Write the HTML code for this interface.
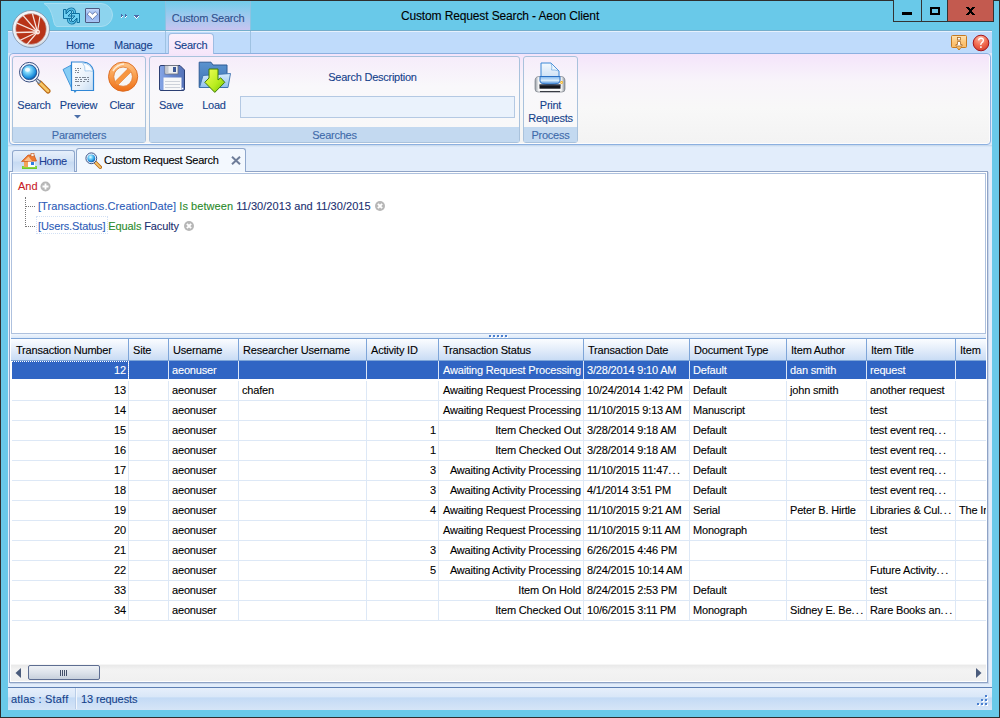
<!DOCTYPE html>
<html><head><meta charset="utf-8">
<style>
*{margin:0;padding:0;box-sizing:border-box}
html,body{width:1000px;height:718px;overflow:hidden;background:#2e2e2e}
body{font-family:"Liberation Sans",sans-serif;font-size:11px;letter-spacing:-0.25px;position:relative;-webkit-text-stroke:0.1px currentColor}
.a{position:absolute}
#frame{left:1px;top:1px;width:998px;height:716px;background:#69c9e9}
#title{left:0;top:9px;width:1000px;text-align:center;font-size:12px;letter-spacing:-0.13px;color:#000}
.wb{top:0;height:22px;border:1px solid #333;border-top:none;background:#69c9e9}
#ribtabs{left:8px;top:31px;width:984px;height:22px;background:#bfdbfb;border-top:1px solid #e6f1fd}
.rtab{top:39px;color:#15428b;font-size:11px}
#ribbg{left:8px;top:53px;width:984px;height:92px;background:#dde9fa}
#ribpanel{left:9px;top:53px;width:982px;height:92px;border:1px solid #8cb0e0;border-radius:4px;box-shadow:inset 1px 0 0 #fcfcfd,inset -1px 0 0 #fcfcfd,inset 0 -1px 0 #fcfcfd;background:linear-gradient(#f4e4fa,#f8f4fa 30%,#f8f8f8 60%,#f3f3f3)}
.grp{top:56px;height:87px;border:1px solid #a9c2dc;border-radius:3px;background:linear-gradient(#f6ecfa,#f9f8fb 35%,#f8f8f8)}
.cap{left:0;right:0;bottom:0;height:15px;background:#c3d9f0;color:#3e6aaa;text-align:center;line-height:16px}
.lbl{color:#15428b;text-align:center}
#content{left:8px;top:145px;width:984px;height:542px;background:#e2edfb}
#outer{left:9px;top:171px;width:979px;height:512px;background:#fff;border:1px solid #8fa3c6;box-shadow:1px 1px 0 #c8d6ea}
#filter{left:11px;top:173px;width:975px;height:161px;background:#fff;border:1px solid #aec1de}
#split{left:11px;top:334px;width:975px;height:4px;background:linear-gradient(#f0f6fd,#dce9f9)}
#grid{left:11px;top:338px;width:975px;height:343px;background:#fff}
#status{left:8px;top:687px;width:984px;height:23px;background:linear-gradient(#e6effb,#d9e7f8 40%,#c3daf5 45%,#d6e5f7);border-top:1px solid #5d7fb3}
.hdr{height:23px;background:linear-gradient(#fbfdff,#e8f0fb 40%,#c9dcf5);border-top:1px solid #7ea5d8;border-bottom:1px solid #7ea5d8}
.hc{position:absolute;letter-spacing:-0.2px;height:21px;line-height:23px;padding-left:4px;border-right:1px solid #7ea5d8;white-space:nowrap;overflow:hidden;color:#000}
.row{left:11px;width:975px;height:20px}
.c{position:absolute;height:20px;line-height:19px;letter-spacing:-0.18px;padding:0 2px 0 3px;border-right:1px solid #dde8f6;border-bottom:1px solid #dde8f6;white-space:nowrap;overflow:hidden;color:#000}
.r{text-align:right}
.el{letter-spacing:1.35px}
.c.s{background:#3065c4;color:#fff;border-right-color:#dbe6f7;border-bottom-color:#fff;height:19px;line-height:19px}
</style></head><body>
<div class="a" id="frame"></div>

<!-- QAT pill -->
<svg class="a" style="left:30px;top:2px" width="84" height="26" viewBox="0 0 84 26"><path d="M14 1.5 H71 A11.5 11.5 0 0 1 71 24.5 H27 C22 24.5 25 8 14 1.5 Z" fill="#8dd4ee" stroke="#a6def2" stroke-width="1"/></svg>
<!-- orb -->
<svg class="a" style="left:11px;top:9px;z-index:5" width="40" height="40" viewBox="0 0 40 40">
<defs><radialGradient id="og" cx="0.45" cy="0.35" r="0.7"><stop offset="0" stop-color="#ffffff"/><stop offset="0.82" stop-color="#e8edf2"/><stop offset="1" stop-color="#b4c0cc"/></radialGradient>
<radialGradient id="fc" cx="0.5" cy="0.5" r="0.5"><stop offset="0" stop-color="#ffffff"/><stop offset="0.6" stop-color="#fbe9e4"/><stop offset="1" stop-color="#fbe9e4" stop-opacity="0"/></radialGradient></defs>
<circle cx="20" cy="20" r="18.5" fill="url(#og)" stroke="#7d8fa6" stroke-width="0.8"/>
<circle cx="20" cy="20" r="15.4" fill="#b83418" stroke="#c9d2dc" stroke-width="0.5"/>
<g stroke="#f7e4de" stroke-linecap="round">
<path d="M26.5 23 L6 14.2" stroke-width="1.3"/><path d="M26.5 23 L12 6.4" stroke-width="1.3"/><path d="M26.5 23 L21.5 5" stroke-width="1.2"/><path d="M26.5 23 L28.8 8" stroke-width="1.2"/><path d="M26.5 23 L5 23.5" stroke-width="1.3"/><path d="M26.5 23 L9.7 31" stroke-width="1.3"/><path d="M26.5 23 L16.6 34.6" stroke-width="1.3"/>
</g>
<circle cx="26.6" cy="23" r="3" fill="url(#fc)"/>
<circle cx="27" cy="22.8" r="0.9" fill="#d47a66"/>
</svg>
<!-- QAT icons -->
<svg class="a" style="left:62px;top:7px" width="19" height="18" viewBox="0 0 19 18">
<g fill="none" stroke-linecap="butt">
<path d="M4.5 8 C5 3.5 7.5 2 9.5 2 C12 2 13 4.5 12.5 7.5" stroke="#0f6f9e" stroke-width="3"/>
<path d="M4.5 8 C5 3.5 7.5 2 9.5 2 C12 2 13 4.5 12.5 7.5" stroke="#59c2ea" stroke-width="1.3"/>
<path d="M14 10 C13.5 14.5 11.5 16 9.5 16 C7 16 6 13.5 6.5 10.5" stroke="#0f6f9e" stroke-width="3"/>
<path d="M14 10 C13.5 14.5 11.5 16 9.5 16 C7 16 6 13.5 6.5 10.5" stroke="#59c2ea" stroke-width="1.3"/>
</g>
<path d="M1.5 2.5 H4 V7 L8 3 L10 5 L6 9 H9.5 V11.5 H1.5 Z" fill="#6fd0f2" stroke="#0f6f9e" stroke-width="1"/>
<path d="M17.5 15.5 H15 V11 L11 15 L9 13 L13 9 H9.5 V6.5 H17.5 Z" fill="#6fd0f2" stroke="#0f6f9e" stroke-width="1"/>
</svg>
<div class="a" style="left:85px;top:8px;width:15px;height:15px;border:1px solid #4d5a80;border-radius:1px;background:linear-gradient(#c4d8fa,#90b0ee 50%,#a9c5f5)"></div>
<svg class="a" style="left:86px;top:10px" width="13" height="10" viewBox="0 0 13 10"><path d="M1.3 4.2 L3.8 1.8 L6.5 4.2 L9.2 1.8 L11.7 4.2 L6.5 9.3 Z" fill="#fff" stroke="#2c3f78" stroke-width="0.9" stroke-dasharray="1 0.6"/></svg>
<svg class="a" style="left:120px;top:13px" width="21" height="7" viewBox="0 0 21 7" shape-rendering="crispEdges"><rect x="1" y="1" width="1" height="1" fill="#4a6aa8"/><rect x="1" y="2" width="1" height="1" fill="#4a6aa8"/><rect x="2" y="2" width="1" height="1" fill="#4a6aa8"/><rect x="1" y="3" width="1" height="1" fill="#4a6aa8"/><rect x="2" y="3" width="1" height="1" fill="#ffffff"/><rect x="1" y="4" width="1" height="1" fill="#ffffff"/><rect x="5" y="1" width="1" height="1" fill="#4a6aa8"/><rect x="5" y="2" width="1" height="1" fill="#4a6aa8"/><rect x="6" y="2" width="1" height="1" fill="#4a6aa8"/><rect x="5" y="3" width="1" height="1" fill="#4a6aa8"/><rect x="6" y="3" width="1" height="1" fill="#ffffff"/><rect x="5" y="4" width="1" height="1" fill="#ffffff"/><rect x="14" y="2" width="1" height="1" fill="#4a6aa8"/><rect x="15" y="2" width="1" height="1" fill="#4a6aa8"/><rect x="16" y="2" width="1" height="1" fill="#4a6aa8"/><rect x="17" y="2" width="1" height="1" fill="#4a6aa8"/><rect x="18" y="2" width="1" height="1" fill="#4a6aa8"/><rect x="14" y="3" width="1" height="1" fill="#ffffff"/><rect x="15" y="3" width="1" height="1" fill="#4a6aa8"/><rect x="16" y="3" width="1" height="1" fill="#4a6aa8"/><rect x="17" y="3" width="1" height="1" fill="#4a6aa8"/><rect x="18" y="3" width="1" height="1" fill="#ffffff"/><rect x="15" y="4" width="1" height="1" fill="#ffffff"/><rect x="16" y="4" width="1" height="1" fill="#4a6aa8"/><rect x="17" y="4" width="1" height="1" fill="#ffffff"/><rect x="16" y="5" width="1" height="1" fill="#ffffff"/></svg>
<!-- contextual tab header -->
<div class="a" style="left:165px;top:1px;width:86px;height:30px;background:linear-gradient(#72cbea,#99caee 45%,#c8c4f0);border-left:1px solid #8cc3e2;border-right:1px solid #8cc3e2;border-bottom:1px solid #6e6596"></div>
<div class="a" style="left:165px;top:12px;width:86px;text-align:center;color:#2d4f8b;font-size:11px">Custom Search</div>
<div class="a" id="title">Custom Request Search - Aeon Client</div>
<!-- window buttons -->
<div class="a wb" style="left:893px;width:29px;border-left:1px solid #333"></div>
<div class="a wb" style="left:921px;width:27px;border-left:1px solid #333"></div>
<div class="a wb" style="left:947px;width:47px;background:#c35a4f;border-left:1px solid #333;border-right:1px solid #333"></div>
<div class="a" style="left:902px;top:12px;width:10px;height:3px;background:#000"></div>
<div class="a" style="left:930px;top:7px;width:10px;height:8px;border:2px solid #000"></div>
<svg class="a" style="left:966px;top:7px" width="9" height="8" viewBox="0 0 9 8" shape-rendering="crispEdges"><g fill="#000"><rect x="0" y="0" width="3" height="1"/><rect x="6" y="0" width="3" height="1"/><rect x="1" y="1" width="3" height="1"/><rect x="5" y="1" width="3" height="1"/><rect x="2" y="2" width="5" height="1"/><rect x="3" y="3" width="3" height="1"/><rect x="3" y="4" width="3" height="1"/><rect x="2" y="5" width="5" height="1"/><rect x="1" y="6" width="3" height="1"/><rect x="5" y="6" width="3" height="1"/><rect x="0" y="7" width="3" height="1"/><rect x="6" y="7" width="3" height="1"/></g></svg>

<div class="a" style="left:8px;top:30px;width:984px;height:1px;background:#74aecb"></div>
<div class="a" id="ribtabs"></div>
<div class="a" id="ribbg"></div>
<div class="a" id="ribpanel"></div>

<!-- ribbon tab labels -->
<div class="a" style="left:165px;top:31px;width:1px;height:22px;background:#9fc2e2"></div>
<div class="a" style="left:250px;top:31px;width:1px;height:22px;background:#9fc2e2"></div>
<div class="a" style="left:168px;top:33px;width:46px;height:21px;border:1px solid #9ebde3;border-bottom:none;border-radius:4px 4px 0 0;background:linear-gradient(#faf0fc,#f6e6fa)"></div>
<div class="a rtab" style="left:66px">Home</div>
<div class="a rtab" style="left:114px">Manage</div>
<div class="a rtab" style="left:174px">Search</div>
<!-- help icons -->
<svg class="a" style="left:951px;top:35px" width="17" height="17" viewBox="0 0 17 17">
<defs><linearGradient id="ig" x1="0" y1="0" x2="0" y2="1"><stop offset="0" stop-color="#ffe3b0"/><stop offset="0.5" stop-color="#fcc476"/><stop offset="1" stop-color="#f9b860"/></linearGradient></defs>
<path d="M1.5 0.5 H14.5 Q15.5 0.5 15.5 1.5 V11.5 Q15.5 12.5 14.5 12.5 H10 L8 15 L6 12.5 H1.5 Q0.5 12.5 0.5 11.5 V1.5 Q0.5 0.5 1.5 0.5 Z" fill="url(#ig)" stroke="#c57a22" stroke-width="1"/>
<rect x="6.5" y="2.5" width="3" height="2.5" fill="#fff" stroke="#a86a26" stroke-width="0.8"/>
<path d="M6.5 6.5 H9.5 V9.5 H11 V11 H5 V9.5 H6.5 Z" fill="#fff" stroke="#a86a26" stroke-width="0.8"/>
</svg>
<svg class="a" style="left:972px;top:34px" width="18" height="18" viewBox="0 0 18 18">
<defs><radialGradient id="hg" cx="0.45" cy="0.2" r="0.85"><stop offset="0" stop-color="#ffb8a2"/><stop offset="0.55" stop-color="#f0694e"/><stop offset="1" stop-color="#d23b2a"/></radialGradient></defs>
<circle cx="9" cy="9" r="7.8" fill="url(#hg)" stroke="#a5161c" stroke-width="1"/>
<path d="M6.6 6.4 Q6.8 4.2 9.2 4.2 Q11.4 4.3 11.4 6.4 Q11.3 8 9.6 8.9 Q8.8 9.5 8.8 11" fill="none" stroke="#fff" stroke-width="1.3"/>
<rect x="8.1" y="12.3" width="1.6" height="1.6" fill="#fff"/>
</svg>
<!-- groups -->
<div class="a grp" style="left:12px;width:134px"><div class="a cap">Parameters</div></div>
<div class="a grp" style="left:149px;width:371px"><div class="a cap">Searches</div></div>
<div class="a grp" style="left:523px;width:55px"><div class="a cap">Process</div></div>
<div class="a lbl" style="left:13px;top:99px;width:42px">Search</div>
<div class="a lbl" style="left:56px;top:99px;width:45px">Preview</div>
<svg class="a" style="left:74px;top:115px" width="7" height="4" viewBox="0 0 7 4"><path d="M0 0 H7 L3.5 3.5 Z" fill="#4c6fa8"/></svg>
<div class="a lbl" style="left:102px;top:99px;width:40px">Clear</div>
<div class="a lbl" style="left:152px;top:99px;width:38px">Save</div>
<div class="a lbl" style="left:194px;top:99px;width:40px">Load</div>
<div class="a lbl" style="left:235px;top:71px;width:275px">Search Description</div>
<div class="a" style="left:240px;top:96px;width:275px;height:22px;border:1px solid #b4c9e3;background:#eaf2fc"></div>
<div class="a lbl" style="left:523px;top:99px;width:55px;line-height:13px">Print<br>Requests</div>
<!-- icons -->
<svg class="a" style="left:18px;top:61px" width="33" height="33" viewBox="0 0 33 33">
<defs><radialGradient id="lg" cx="0.4" cy="0.35" r="0.7"><stop offset="0" stop-color="#e8fbff"/><stop offset="0.3" stop-color="#7fd8fb"/><stop offset="0.75" stop-color="#1d8fdc"/><stop offset="1" stop-color="#0b4f9c"/></radialGradient>
<linearGradient id="hd" x1="0" y1="0" x2="1" y2="0"><stop offset="0" stop-color="#f8dca0"/><stop offset="1" stop-color="#e08a1a"/></linearGradient></defs>
<path d="M22 22 L30 30" stroke="#b8650e" stroke-width="5" stroke-linecap="round"/>
<path d="M22 22 L30 30" stroke="#f7c767" stroke-width="2.8" stroke-linecap="round"/>
<path d="M18.5 18.5 L22 22" stroke="#5a6a88" stroke-width="3.4"/>
<path d="M19 19 L21.5 21.5" stroke="#e8eef6" stroke-width="1.2"/>
<circle cx="11.3" cy="11.2" r="9.8" fill="#eef4fd" stroke="#3a4f80" stroke-width="1"/>
<circle cx="11.3" cy="11.2" r="7.4" fill="url(#lg)" stroke="#1e4a8c" stroke-width="0.9"/>
<ellipse cx="9.5" cy="8.8" rx="2.6" ry="2" fill="#ffffff" opacity="0.75"/>
</svg>
<svg class="a" style="left:62px;top:61px" width="33" height="33" viewBox="0 0 33 33">
<defs><linearGradient id="pg" x1="0" y1="0" x2="1" y2="1"><stop offset="0" stop-color="#ffffff"/><stop offset="0.6" stop-color="#e9f2fb"/><stop offset="1" stop-color="#c6dcf2"/></linearGradient></defs>
<path d="M1 8.5 L9 4.2 L10 28 Z" fill="#86cdf5" stroke="#3a8fd6" stroke-width="0.9"/>
<path d="M9.5 1 H21 Q29.5 1.5 31.5 10 V29.5 H9.5 Z" fill="url(#pg)" stroke="#2f86d6" stroke-width="1.2"/>
<path d="M20.5 1.8 Q23.5 5 23 10 Q28 9.3 31 10.5 Q29 3 20.5 1.8 Z" fill="#fbfdff" stroke="#8fbfe6" stroke-width="0.7"/>
<g fill="#7d8794"><rect x="13" y="7" width="1" height="1"/><rect x="15" y="7" width="2" height="1"/><rect x="18" y="7" width="1" height="1"/><rect x="13" y="9" width="2" height="1"/><rect x="16" y="9" width="1" height="1"/><rect x="13" y="11" width="1" height="1"/><rect x="15" y="11" width="2" height="1"/><rect x="13" y="16" width="3" height="1"/><rect x="17" y="16" width="2" height="1"/><rect x="20" y="16" width="4" height="1"/><rect x="25" y="16" width="2" height="1"/><rect x="13" y="18" width="2" height="1"/><rect x="16" y="18" width="1" height="1"/><rect x="18" y="18" width="2" height="1"/><rect x="22" y="18" width="3" height="1"/><rect x="26" y="18" width="1" height="1"/><rect x="13" y="20" width="4" height="1"/><rect x="18" y="20" width="2" height="1"/><rect x="21" y="20" width="2" height="1"/><rect x="25" y="20" width="2" height="1"/><rect x="13" y="24" width="1" height="1"/><rect x="15" y="24" width="3" height="1"/></g>
<path d="M11.5 29.5 L12.8 32 L15 29.5 Z" fill="#3a8fd6"/>
</svg>
<svg class="a" style="left:107px;top:61px" width="33" height="33" viewBox="0 0 33 33">
<defs><linearGradient id="cg" x1="0" y1="0" x2="0" y2="1"><stop offset="0" stop-color="#ffc68a"/><stop offset="0.45" stop-color="#f9a050"/><stop offset="1" stop-color="#ee6f18"/></linearGradient>
<clipPath id="cc"><ellipse cx="16.1" cy="15.7" rx="9.3" ry="9.6"/></clipPath></defs>
<circle cx="16.1" cy="15.7" r="14.6" fill="url(#cg)" stroke="#d9661c" stroke-width="0.9"/>
<ellipse cx="16.1" cy="15.7" rx="9.3" ry="9.6" fill="#f6f6f6" stroke="#e07a30" stroke-width="0.8"/>
<g clip-path="url(#cc)"><path d="M4.6 24 L24.6 4 L27.8 7.2 L7.8 27.2 Z" fill="#f7963f" stroke="#e07a30" stroke-width="0.6"/></g>
<path d="M6 10 Q10 3.5 17 3" stroke="#fff6e8" stroke-width="1.5" fill="none" opacity="0.8"/>
</svg>
<svg class="a" style="left:159px;top:65px" width="26" height="26" viewBox="0 0 26 26">
<defs><linearGradient id="dg" x1="0" y1="0" x2="1" y2="0"><stop offset="0" stop-color="#86a6e6"/><stop offset="0.5" stop-color="#6585cc"/><stop offset="1" stop-color="#5572b8"/></linearGradient></defs>
<path d="M2 0.5 H21 L25.5 5 V24 Q25.5 25.5 24 25.5 H2 Q0.5 25.5 0.5 24 V2 Q0.5 0.5 2 0.5 Z" fill="url(#dg)" stroke="#2c3f73" stroke-width="1"/>
<rect x="6" y="0.5" width="13" height="8.5" fill="#eceef1" stroke="#6b6f78" stroke-width="0.8"/>
<rect x="6.5" y="1" width="3" height="7.5" fill="#c5c9d0"/>
<rect x="14" y="2" width="3" height="5" fill="#3b5794"/>
<rect x="4.5" y="12.5" width="18" height="12.5" fill="#f7f8f9"/>
<g fill="#cdd2da"><rect x="6" y="16" width="15" height="1"/><rect x="6" y="19" width="15" height="1"/><rect x="6" y="22" width="15" height="1"/></g>
<rect x="22.8" y="22.8" width="1.5" height="1.5" fill="#fff"/>
</svg>
<svg class="a" style="left:198px;top:61px" width="34" height="33" viewBox="0 0 34 33">
<defs><linearGradient id="fg" x1="0" y1="0" x2="0" y2="1"><stop offset="0" stop-color="#d6ebfc"/><stop offset="1" stop-color="#8fc0ec"/></linearGradient>
<linearGradient id="fbg" x1="0" y1="0" x2="0" y2="1"><stop offset="0" stop-color="#5b93cf"/><stop offset="1" stop-color="#3f74b4"/></linearGradient>
<linearGradient id="ag" x1="0" y1="0" x2="1" y2="1"><stop offset="0" stop-color="#f4ff5a"/><stop offset="0.6" stop-color="#b8ec1e"/><stop offset="1" stop-color="#6cbf08"/></linearGradient></defs>
<path d="M1.2 1.2 H13 L15 4 H29 V26.5 H1.2 Z" fill="url(#fbg)" stroke="#2d5a94" stroke-width="1"/>
<path d="M5 14.5 L32.5 12.5 L30 26.5 H1.5 Z" fill="url(#fg)" stroke="#3a6fae" stroke-width="0.9"/>
<path d="M11 8 H20 V19 L22.6 16.8 L26.8 21.3 L16.8 31.4 L6.8 21.3 L11 17 Z" fill="url(#ag)" stroke="#3f7a08" stroke-width="1"/>
</svg>
<svg class="a" style="left:534px;top:62px" width="32" height="31" viewBox="0 0 32 31">
<defs><linearGradient id="prg" x1="0" y1="0" x2="1" y2="0"><stop offset="0" stop-color="#8f969e"/><stop offset="0.12" stop-color="#f4f5f6"/><stop offset="0.88" stop-color="#f0f1f2"/><stop offset="1" stop-color="#8a9199"/></linearGradient>
<linearGradient id="ppg" x1="0" y1="0" x2="0" y2="1"><stop offset="0" stop-color="#f4f9fe"/><stop offset="1" stop-color="#cfe2f5"/></linearGradient>
<linearGradient id="lidg" x1="0" y1="0" x2="0" y2="1"><stop offset="0" stop-color="#7fb6ec"/><stop offset="0.5" stop-color="#d8ecfc"/><stop offset="1" stop-color="#2a78d0"/></linearGradient></defs>
<path d="M7 1 H17 L25 9 V15 H7 Z" fill="url(#ppg)" stroke="#3b87d5" stroke-width="1"/>
<path d="M17 1.5 Q18.5 5 17.5 8 Q21 7.5 24.5 9" fill="#eef6fd" stroke="#6fa9df" stroke-width="0.7"/>
<path d="M1 19 Q1 14.5 5 14.5 H27 Q31 14.5 31 19 V27 Q31 30 28 30 H4 Q1 30 1 27 Z" fill="url(#prg)" stroke="#7c838b" stroke-width="0.7"/>
<path d="M6 14.5 H26 V19 Q26 22.5 16 22.5 Q6 22.5 6 19 Z" fill="url(#lidg)" stroke="#2a70c4" stroke-width="1"/>
<rect x="5.5" y="22.5" width="21" height="4.5" fill="#13151c"/>
<rect x="5.5" y="22.5" width="21" height="1" fill="#4a5060"/>
<path d="M5 27.5 H27" stroke="#fafafa" stroke-width="1.6"/>
<path d="M6 29.6 H26" stroke="#2b2e36" stroke-width="1"/>
<circle cx="27.6" cy="20.5" r="1.4" fill="#f7b323"/><circle cx="27.6" cy="20.5" r="0.6" fill="#fff3a8"/>
</svg>
<div class="a" id="content"></div>
<div class="a" id="outer"></div>
<div class="a" id="filter"></div>
<div class="a" id="split"></div>
<svg class="a" style="left:489px;top:335px" width="20" height="3" viewBox="0 0 20 3"><g fill="#fff"><rect x="1" y="1" width="2" height="2"/><rect x="5" y="1" width="2" height="2"/><rect x="9" y="1" width="2" height="2"/><rect x="13" y="1" width="2" height="2"/><rect x="17" y="1" width="2" height="2"/></g><g fill="#4a7fcf"><rect x="0" y="0" width="2" height="2"/><rect x="4" y="0" width="2" height="2"/><rect x="8" y="0" width="2" height="2"/><rect x="12" y="0" width="2" height="2"/><rect x="16" y="0" width="2" height="2"/></g></svg>

<!-- doc tabs -->
<div class="a" style="left:8px;top:145px;width:984px;height:2px;background:linear-gradient(#c3d5ea,#e0ecfb)"></div>
<div class="a" style="left:12px;top:150px;width:63px;height:22px;border:1px solid #8fa7cc;border-bottom:none;border-radius:3px 3px 0 0;background:linear-gradient(#e6effb,#d4e3f6 45%,#c6daf2 55%,#d8e6f8)"></div>
<div class="a" style="left:76px;top:148px;width:170px;height:24px;border:1px solid #8fa7cc;border-bottom:none;border-radius:3px 3px 0 0;background:#f3f8fe"></div>
<svg class="a" style="left:21px;top:153px" width="16" height="16" viewBox="0 0 16 16">
<path d="M1 16 H16 V13 H1 Z" fill="#6ec82a"/><path d="M1.5 14 H15.5" stroke="#b9ec68" stroke-width="0.8"/>
<rect x="3" y="8" width="11" height="6" fill="#fafafa"/><rect x="3" y="8" width="4" height="6" fill="#f2a35a"/>
<rect x="10" y="9" width="3" height="3" fill="#2f7fe0"/>
<path d="M0.5 8.5 L7 2 L13 2 L15.5 8 Z" fill="#ee7a32" stroke="#c8541a" stroke-width="0.7"/>
<path d="M3 8 L7.5 3.5 L11 8 Z" fill="#f9c08a"/>
<rect x="10" y="0.5" width="3" height="3" fill="#f6f0ea" stroke="#c8541a" stroke-width="0.6"/>
</svg>
<div class="a" style="left:39px;top:155px;color:#1c3f94;font-size:11px;letter-spacing:-0.4px">Home</div>
<svg class="a" style="left:85px;top:152px" width="17" height="17" viewBox="0 0 17 17">
<path d="M10.5 10.5 L15.3 15.3" stroke="#b8650e" stroke-width="3.4" stroke-linecap="round"/>
<path d="M10.5 10.5 L15.3 15.3" stroke="#f5c46a" stroke-width="1.8" stroke-linecap="round"/>
<circle cx="6.3" cy="6.3" r="5.4" fill="#eef4ff" stroke="#3d5588" stroke-width="1"/>
<circle cx="6.3" cy="6.3" r="3.9" fill="url(#lg)"/>
</svg>
<div class="a" style="left:104px;top:154px;color:#000;font-size:11px">Custom Request Search</div>
<svg class="a" style="left:231px;top:156px" width="10" height="9" viewBox="0 0 10 9"><path d="M1 0.8 L9 8.2 M9 0.8 L1 8.2" stroke="#6e7d99" stroke-width="2"/></svg>
<!-- filter content -->
<div class="a" style="left:18px;top:180px;color:#c8201f;letter-spacing:0">And</div>
<svg class="a" style="left:40px;top:181px" width="11" height="11" viewBox="0 0 11 11"><circle cx="5.5" cy="5.5" r="5" fill="#b7b7b7"/><path d="M5.5 2.5 V8.5 M2.5 5.5 H8.5" stroke="#fff" stroke-width="1.8"/></svg>
<div class="a" style="left:25px;top:197px;width:1px;height:30px;border-left:1px dotted #777"></div>
<div class="a" style="left:26px;top:206px;width:9px;height:1px;border-top:1px dotted #777"></div>
<div class="a" style="left:26px;top:226px;width:9px;height:1px;border-top:1px dotted #777"></div>
<div class="a" style="left:38px;top:200px;white-space:nowrap;letter-spacing:0.06px"><span style="color:#2c5cb8">[Transactions.CreationDate]</span> <span style="color:#2b8a2b">Is between</span> <span style="color:#1b2f70">11/30/2013</span> <span style="color:#1b2f70">and</span> <span style="color:#1b2f70">11/30/2015</span></div>
<svg class="a" style="left:375px;top:201px" width="11" height="11" viewBox="0 0 11 11"><circle cx="5" cy="5" r="5" fill="#b7b7b7"/><path d="M2.9 2.9 L7.1 7.1 M7.1 2.9 L2.9 7.1" stroke="#fff" stroke-width="2"/></svg>
<div class="a" style="left:36px;top:216px;width:72px;height:18px;border:1px dotted #d2e0f4"></div>
<div class="a" style="left:38px;top:220px;white-space:nowrap;letter-spacing:-0.12px"><span style="color:#2c5cb8">[Users.Status]</span> <span style="color:#2b8a2b">Equals</span> <span style="color:#1b2f70">Faculty</span></div>
<svg class="a" style="left:184px;top:221px" width="11" height="11" viewBox="0 0 11 11"><circle cx="5" cy="5" r="5" fill="#b7b7b7"/><path d="M2.9 2.9 L7.1 7.1 M7.1 2.9 L2.9 7.1" stroke="#fff" stroke-width="2"/></svg>
<div class="a" id="grid"></div>
<!--GRID-->
<div id="gridclip" class="a" style="left:11px;top:338px;width:975px;height:325px;overflow:hidden">
<div class="a hdr" style="left:0;top:0;width:1040px"></div>
<div class="hc" style="left:1px;top:1px;width:117px">Transaction Number</div>
<div class="hc" style="left:118px;top:1px;width:40px">Site</div>
<div class="hc" style="left:158px;top:1px;width:70px">Username</div>
<div class="hc" style="left:228px;top:1px;width:128px">Researcher Username</div>
<div class="hc" style="left:356px;top:1px;width:72px">Activity ID</div>
<div class="hc" style="left:428px;top:1px;width:145px">Transaction Status</div>
<div class="hc" style="left:573px;top:1px;width:106px">Transaction Date</div>
<div class="hc" style="left:679px;top:1px;width:97px">Document Type</div>
<div class="hc" style="left:776px;top:1px;width:80px">Item Author</div>
<div class="hc" style="left:856px;top:1px;width:89px">Item Title</div>
<div class="hc" style="left:945px;top:1px;width:85px">Item</div>
<div class="c r s" style="left:1px;top:23px;width:117px">12</div>
<div class="c s" style="left:118px;top:23px;width:40px"></div>
<div class="c s" style="left:158px;top:23px;width:70px">aeonuser</div>
<div class="c s" style="left:228px;top:23px;width:128px"></div>
<div class="c r s" style="left:356px;top:23px;width:72px"></div>
<div class="c r s" style="left:428px;top:23px;width:145px">Awaiting Request Processing</div>
<div class="c s" style="left:573px;top:23px;width:106px">3/28/2014 9:10 AM</div>
<div class="c s" style="left:679px;top:23px;width:97px">Default</div>
<div class="c s" style="left:776px;top:23px;width:80px">dan smith</div>
<div class="c s" style="left:856px;top:23px;width:89px">request</div>
<div class="c s" style="left:945px;top:23px;width:85px"></div>
<div class="c r" style="left:1px;top:43px;width:117px">13</div>
<div class="c" style="left:118px;top:43px;width:40px"></div>
<div class="c" style="left:158px;top:43px;width:70px">aeonuser</div>
<div class="c" style="left:228px;top:43px;width:128px">chafen</div>
<div class="c r" style="left:356px;top:43px;width:72px"></div>
<div class="c r" style="left:428px;top:43px;width:145px">Awaiting Request Processing</div>
<div class="c" style="left:573px;top:43px;width:106px">10/24/2014 1:42 PM</div>
<div class="c" style="left:679px;top:43px;width:97px">Default</div>
<div class="c" style="left:776px;top:43px;width:80px">john smith</div>
<div class="c" style="left:856px;top:43px;width:89px">another request</div>
<div class="c" style="left:945px;top:43px;width:85px"></div>
<div class="c r" style="left:1px;top:63px;width:117px">14</div>
<div class="c" style="left:118px;top:63px;width:40px"></div>
<div class="c" style="left:158px;top:63px;width:70px">aeonuser</div>
<div class="c" style="left:228px;top:63px;width:128px"></div>
<div class="c r" style="left:356px;top:63px;width:72px"></div>
<div class="c r" style="left:428px;top:63px;width:145px">Awaiting Request Processing</div>
<div class="c" style="left:573px;top:63px;width:106px">11/10/2015 9:13 AM</div>
<div class="c" style="left:679px;top:63px;width:97px">Manuscript</div>
<div class="c" style="left:776px;top:63px;width:80px"></div>
<div class="c" style="left:856px;top:63px;width:89px">test</div>
<div class="c" style="left:945px;top:63px;width:85px"></div>
<div class="c r" style="left:1px;top:83px;width:117px">15</div>
<div class="c" style="left:118px;top:83px;width:40px"></div>
<div class="c" style="left:158px;top:83px;width:70px">aeonuser</div>
<div class="c" style="left:228px;top:83px;width:128px"></div>
<div class="c r" style="left:356px;top:83px;width:72px">1</div>
<div class="c r" style="left:428px;top:83px;width:145px">Item Checked Out</div>
<div class="c" style="left:573px;top:83px;width:106px">3/28/2014 9:18 AM</div>
<div class="c" style="left:679px;top:83px;width:97px">Default</div>
<div class="c" style="left:776px;top:83px;width:80px"></div>
<div class="c" style="left:856px;top:83px;width:89px">test event req<span class="el">...</span></div>
<div class="c" style="left:945px;top:83px;width:85px"></div>
<div class="c r" style="left:1px;top:103px;width:117px">16</div>
<div class="c" style="left:118px;top:103px;width:40px"></div>
<div class="c" style="left:158px;top:103px;width:70px">aeonuser</div>
<div class="c" style="left:228px;top:103px;width:128px"></div>
<div class="c r" style="left:356px;top:103px;width:72px">1</div>
<div class="c r" style="left:428px;top:103px;width:145px">Item Checked Out</div>
<div class="c" style="left:573px;top:103px;width:106px">3/28/2014 9:18 AM</div>
<div class="c" style="left:679px;top:103px;width:97px">Default</div>
<div class="c" style="left:776px;top:103px;width:80px"></div>
<div class="c" style="left:856px;top:103px;width:89px">test event req<span class="el">...</span></div>
<div class="c" style="left:945px;top:103px;width:85px"></div>
<div class="c r" style="left:1px;top:123px;width:117px">17</div>
<div class="c" style="left:118px;top:123px;width:40px"></div>
<div class="c" style="left:158px;top:123px;width:70px">aeonuser</div>
<div class="c" style="left:228px;top:123px;width:128px"></div>
<div class="c r" style="left:356px;top:123px;width:72px">3</div>
<div class="c r" style="left:428px;top:123px;width:145px">Awaiting Activity Processing</div>
<div class="c" style="left:573px;top:123px;width:106px">11/10/2015 11:47<span class="el">...</span></div>
<div class="c" style="left:679px;top:123px;width:97px">Default</div>
<div class="c" style="left:776px;top:123px;width:80px"></div>
<div class="c" style="left:856px;top:123px;width:89px">test event req<span class="el">...</span></div>
<div class="c" style="left:945px;top:123px;width:85px"></div>
<div class="c r" style="left:1px;top:143px;width:117px">18</div>
<div class="c" style="left:118px;top:143px;width:40px"></div>
<div class="c" style="left:158px;top:143px;width:70px">aeonuser</div>
<div class="c" style="left:228px;top:143px;width:128px"></div>
<div class="c r" style="left:356px;top:143px;width:72px">3</div>
<div class="c r" style="left:428px;top:143px;width:145px">Awaiting Activity Processing</div>
<div class="c" style="left:573px;top:143px;width:106px">4/1/2014 3:51 PM</div>
<div class="c" style="left:679px;top:143px;width:97px">Default</div>
<div class="c" style="left:776px;top:143px;width:80px"></div>
<div class="c" style="left:856px;top:143px;width:89px">test event req<span class="el">...</span></div>
<div class="c" style="left:945px;top:143px;width:85px"></div>
<div class="c r" style="left:1px;top:163px;width:117px">19</div>
<div class="c" style="left:118px;top:163px;width:40px"></div>
<div class="c" style="left:158px;top:163px;width:70px">aeonuser</div>
<div class="c" style="left:228px;top:163px;width:128px"></div>
<div class="c r" style="left:356px;top:163px;width:72px">4</div>
<div class="c r" style="left:428px;top:163px;width:145px">Awaiting Request Processing</div>
<div class="c" style="left:573px;top:163px;width:106px">11/10/2015 9:21 AM</div>
<div class="c" style="left:679px;top:163px;width:97px">Serial</div>
<div class="c" style="left:776px;top:163px;width:80px">Peter B. Hirtle</div>
<div class="c" style="left:856px;top:163px;width:89px">Libraries &amp; Cul<span class="el">...</span></div>
<div class="c" style="left:945px;top:163px;width:85px">The Ir</div>
<div class="c r" style="left:1px;top:183px;width:117px">20</div>
<div class="c" style="left:118px;top:183px;width:40px"></div>
<div class="c" style="left:158px;top:183px;width:70px">aeonuser</div>
<div class="c" style="left:228px;top:183px;width:128px"></div>
<div class="c r" style="left:356px;top:183px;width:72px"></div>
<div class="c r" style="left:428px;top:183px;width:145px">Awaiting Request Processing</div>
<div class="c" style="left:573px;top:183px;width:106px">11/10/2015 9:11 AM</div>
<div class="c" style="left:679px;top:183px;width:97px">Monograph</div>
<div class="c" style="left:776px;top:183px;width:80px"></div>
<div class="c" style="left:856px;top:183px;width:89px">test</div>
<div class="c" style="left:945px;top:183px;width:85px"></div>
<div class="c r" style="left:1px;top:203px;width:117px">21</div>
<div class="c" style="left:118px;top:203px;width:40px"></div>
<div class="c" style="left:158px;top:203px;width:70px">aeonuser</div>
<div class="c" style="left:228px;top:203px;width:128px"></div>
<div class="c r" style="left:356px;top:203px;width:72px">3</div>
<div class="c r" style="left:428px;top:203px;width:145px">Awaiting Activity Processing</div>
<div class="c" style="left:573px;top:203px;width:106px">6/26/2015 4:46 PM</div>
<div class="c" style="left:679px;top:203px;width:97px"></div>
<div class="c" style="left:776px;top:203px;width:80px"></div>
<div class="c" style="left:856px;top:203px;width:89px"></div>
<div class="c" style="left:945px;top:203px;width:85px"></div>
<div class="c r" style="left:1px;top:223px;width:117px">22</div>
<div class="c" style="left:118px;top:223px;width:40px"></div>
<div class="c" style="left:158px;top:223px;width:70px">aeonuser</div>
<div class="c" style="left:228px;top:223px;width:128px"></div>
<div class="c r" style="left:356px;top:223px;width:72px">5</div>
<div class="c r" style="left:428px;top:223px;width:145px">Awaiting Activity Processing</div>
<div class="c" style="left:573px;top:223px;width:106px">8/24/2015 10:14 AM</div>
<div class="c" style="left:679px;top:223px;width:97px"></div>
<div class="c" style="left:776px;top:223px;width:80px"></div>
<div class="c" style="left:856px;top:223px;width:89px">Future Activity<span class="el">...</span></div>
<div class="c" style="left:945px;top:223px;width:85px"></div>
<div class="c r" style="left:1px;top:243px;width:117px">33</div>
<div class="c" style="left:118px;top:243px;width:40px"></div>
<div class="c" style="left:158px;top:243px;width:70px">aeonuser</div>
<div class="c" style="left:228px;top:243px;width:128px"></div>
<div class="c r" style="left:356px;top:243px;width:72px"></div>
<div class="c r" style="left:428px;top:243px;width:145px">Item On Hold</div>
<div class="c" style="left:573px;top:243px;width:106px">8/24/2015 2:53 PM</div>
<div class="c" style="left:679px;top:243px;width:97px">Default</div>
<div class="c" style="left:776px;top:243px;width:80px"></div>
<div class="c" style="left:856px;top:243px;width:89px">test</div>
<div class="c" style="left:945px;top:243px;width:85px"></div>
<div class="c r" style="left:1px;top:263px;width:117px">34</div>
<div class="c" style="left:118px;top:263px;width:40px"></div>
<div class="c" style="left:158px;top:263px;width:70px">aeonuser</div>
<div class="c" style="left:228px;top:263px;width:128px"></div>
<div class="c r" style="left:356px;top:263px;width:72px"></div>
<div class="c r" style="left:428px;top:263px;width:145px">Item Checked Out</div>
<div class="c" style="left:573px;top:263px;width:106px">10/6/2015 3:11 PM</div>
<div class="c" style="left:679px;top:263px;width:97px">Monograph</div>
<div class="c" style="left:776px;top:263px;width:80px">Sidney E. Be<span class="el">...</span></div>
<div class="c" style="left:856px;top:263px;width:89px">Rare Books an<span class="el">...</span></div>
<div class="c" style="left:945px;top:263px;width:85px"></div>
</div>
<!--/GRID-->
<div class="a" style="left:11px;top:361px;width:118px;height:19px;border:1px dotted #fff"></div>
<div class="a" id="status"></div>

<!-- scrollbar -->
<div class="a" style="left:11px;top:664px;width:975px;height:17px;background:linear-gradient(#e9e9e9,#f3f3f3 30%,#f0f0f0);border-top:1px solid #f6f6f6"></div>
<svg class="a" style="left:15px;top:668px" width="7" height="10" viewBox="0 0 7 10"><path d="M6 0 V10 L0.5 5 Z" fill="#4b5c7c"/></svg>
<svg class="a" style="left:975px;top:668px" width="7" height="10" viewBox="0 0 7 10"><path d="M1 0 V10 L6.5 5 Z" fill="#4b5c7c"/></svg>
<div class="a" style="left:28px;top:665px;width:72px;height:15px;border:1px solid #5d6d91;border-radius:2px;background:linear-gradient(#eef1f5,#dde3eb 50%,#c7d0dc)"></div>
<svg class="a" style="left:60px;top:670px" width="8" height="6" viewBox="0 0 8 6"><g fill="#44506a"><rect x="0" y="0" width="1" height="6"/><rect x="2" y="0" width="1" height="6"/><rect x="4" y="0" width="1" height="6"/><rect x="6" y="0" width="1" height="6"/></g></svg>
<!-- status -->
<div class="a" style="left:11px;top:693px;color:#15428b;letter-spacing:0.2px">atlas : Staff</div>
<div class="a" style="left:75px;top:688px;width:1px;height:21px;background:#b9cde8;box-shadow:1px 0 0 #f2f7fd"></div>
<div class="a" style="left:81px;top:693px;color:#15428b;letter-spacing:-0.1px">13 requests</div>
<svg class="a" style="left:976px;top:694px" width="12" height="12" viewBox="0 0 12 12"><g fill="#fff"><rect x="10" y="2" width="2" height="2"/><rect x="6" y="6" width="2" height="2"/><rect x="10" y="6" width="2" height="2"/><rect x="2" y="10" width="2" height="2"/><rect x="6" y="10" width="2" height="2"/><rect x="10" y="10" width="2" height="2"/></g><g fill="#4a7fcf"><rect x="9" y="1" width="2" height="2"/><rect x="5" y="5" width="2" height="2"/><rect x="9" y="5" width="2" height="2"/><rect x="1" y="9" width="2" height="2"/><rect x="5" y="9" width="2" height="2"/><rect x="9" y="9" width="2" height="2"/></g></svg>
</body></html>
